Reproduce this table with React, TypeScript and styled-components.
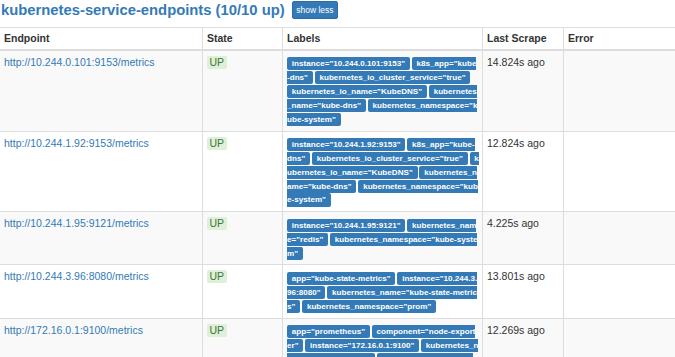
import React from 'react'
import styled, { createGlobalStyle } from 'styled-components'

const GlobalStyle = createGlobalStyle`
  html, body {
    margin: 0;
    padding: 0;
    background: #fff;
    overflow: hidden;
  }
  body {
    font-family: "Liberation Sans", Arial, Helvetica, sans-serif;
    color: #333;
  }
`

const Page = styled.div`
  width: 720px;
`

const JobHeading = styled.h2`
  display: flex;
  align-items: center;
  gap: 7px;
  margin: 0 0 7px 1px;
  height: 20px;
  font-size: 14.8px;
  line-height: 20px;
  font-weight: bold;

  a {
    color: #337ab7;
    text-decoration: none;
  }
`

const ToggleButton = styled.button`
  height: 18px;
  padding: 0 3.5px;
  border: 1px solid #2e6da4;
  border-radius: 2px;
  background: #337ab7;
  color: #fff;
  font-family: inherit;
  font-size: 8.5px;
  line-height: 16px;
`

const Table = styled.table`
  width: 720px;
  table-layout: fixed;
  border-collapse: collapse;
  border-spacing: 0;
  font-size: 10.5px;
`

const HeadCell = styled.th<{ $w?: number }>`
  width: ${(p) => (p.$w ? `${p.$w}px` : 'auto')};
  padding: 4px 4px;
  line-height: 13px;
  text-align: left;
  font-weight: bold;
  color: #333;
  border: 1px solid #ddd;
  border-bottom: 2px solid #ddd;

  &:first-child {
    border-left: none;
  }
`

const Row = styled.tr<{ $odd: boolean }>`
  background: ${(p) => (p.$odd ? '#f9f9f9' : '#fff')};
`

const Cell = styled.td`
  padding: 5px 4px 5.5px;
  line-height: 13.85px;
  vertical-align: top;
  border: 1px solid #ddd;
  color: #333;

  &:first-child {
    border-left: none;
  }
`

const EndpointLink = styled.a`
  color: #337ab7;
  text-decoration: none;
`

const StateBadge = styled.span`
  display: inline-block;
  padding: 0 2.5px;
  line-height: 13px;
  border-radius: 2px;
  background: #dff0d8;
  color: #3c763d;
`

const LabelsCell = styled(Cell)`
  padding-right: 3px;
  word-break: break-all;
  word-spacing: -1.1px;
  overflow: hidden;
`

const Label = styled.span`
  padding: 0.2em 0.6em 0.3em;
  border-radius: 0.25em;
  background: #337ab7;
  color: #fff;
  font-size: 8.1px;
  font-weight: bold;
  line-height: 1;
`

type Target = {
  endpoint: string
  labels: string[]
  scrape: string
}

const dnsLabels = [
  'k8s_app="kube-dns"',
  'kubernetes_io_cluster_service="true"',
  'kubernetes_io_name="KubeDNS"',
  'kubernetes_name="kube-dns"',
  'kubernetes_namespace="kube-system"',
]

const targets: Target[] = [
  {
    endpoint: 'http://10.244.0.101:9153/metrics',
    labels: ['instance="10.244.0.101:9153"', ...dnsLabels],
    scrape: '14.824s ago',
  },
  {
    endpoint: 'http://10.244.1.92:9153/metrics',
    labels: ['instance="10.244.1.92:9153"', ...dnsLabels],
    scrape: '12.824s ago',
  },
  {
    endpoint: 'http://10.244.1.95:9121/metrics',
    labels: [
      'instance="10.244.1.95:9121"',
      'kubernetes_name="redis"',
      'kubernetes_namespace="kube-system"',
    ],
    scrape: '4.225s ago',
  },
  {
    endpoint: 'http://10.244.3.96:8080/metrics',
    labels: [
      'app="kube-state-metrics"',
      'instance="10.244.3.96:8080"',
      'kubernetes_name="kube-state-metrics"',
      'kubernetes_namespace="prom"',
    ],
    scrape: '13.801s ago',
  },
  {
    endpoint: 'http://172.16.0.1:9100/metrics',
    labels: [
      'app="prometheus"',
      'component="node-exporter"',
      'instance="172.16.0.1:9100"',
      'kubernetes_name="node-exporter"',
      'kubernetes_namespace="prom"',
    ],
    scrape: '12.269s ago',
  },
]

export default function App() {
  return (
    <Page>
      <GlobalStyle />
      <JobHeading>
        <a href="#job-kubernetes-service-endpoints">kubernetes-service-endpoints (10/10 up)</a>
        <ToggleButton>show less</ToggleButton>
      </JobHeading>
      <Table>
        <thead>
          <tr>
            <HeadCell $w={194}>Endpoint</HeadCell>
            <HeadCell $w={71}>State</HeadCell>
            <HeadCell $w={191}>Labels</HeadCell>
            <HeadCell $w={72}>Last Scrape</HeadCell>
            <HeadCell>Error</HeadCell>
          </tr>
        </thead>
        <tbody>
          {targets.map((t, i) => (
            <Row key={t.endpoint} $odd={i % 2 === 0}>
              <Cell>
                <EndpointLink href={t.endpoint}>{t.endpoint}</EndpointLink>
              </Cell>
              <Cell>
                <StateBadge>UP</StateBadge>
              </Cell>
              <LabelsCell>
                {t.labels.map((l, j) => (
                  <React.Fragment key={l}>
                    {j > 0 && ' '}
                    <Label>{l}</Label>
                  </React.Fragment>
                ))}
              </LabelsCell>
              <Cell>{t.scrape}</Cell>
              <Cell />
            </Row>
          ))}
        </tbody>
      </Table>
    </Page>
  )
}
